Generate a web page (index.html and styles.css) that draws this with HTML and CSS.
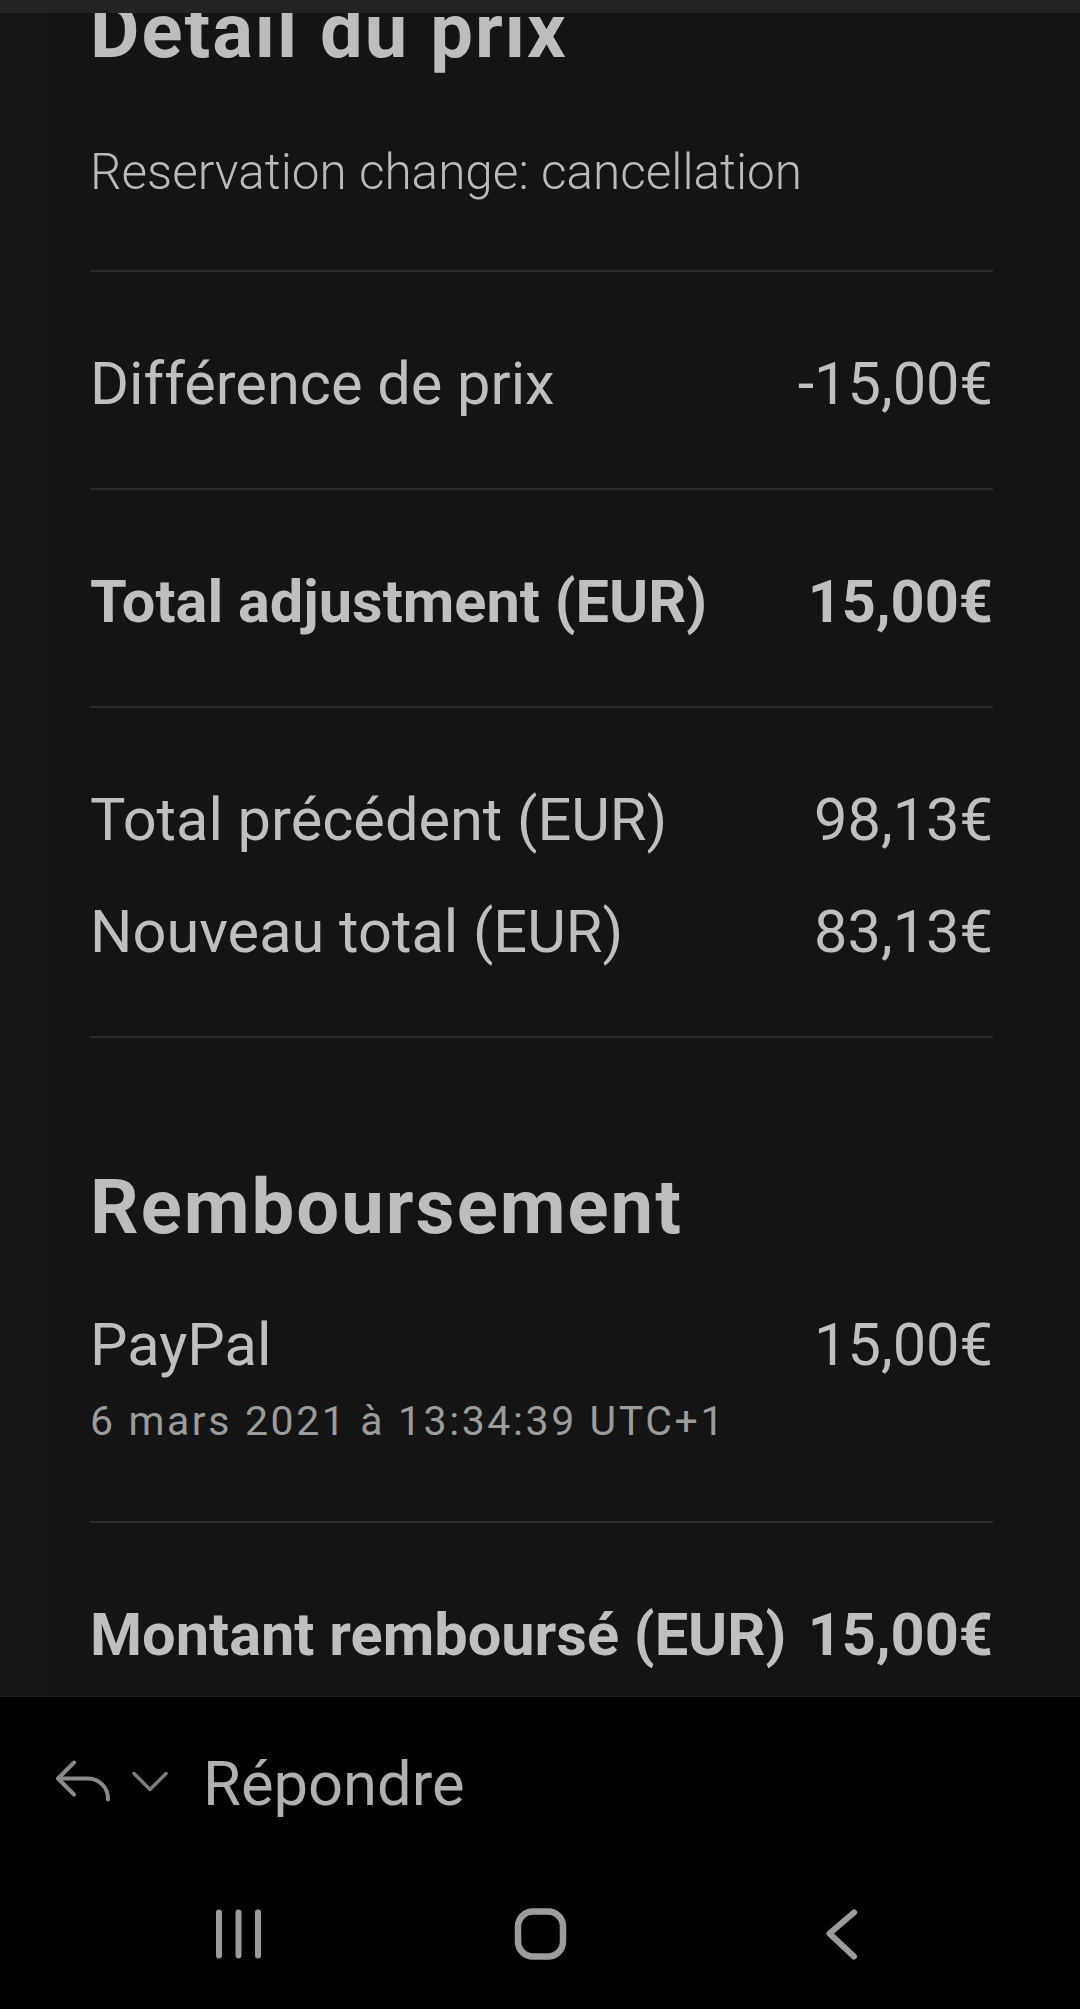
FILE: index.html
```html
<!DOCTYPE html>
<html lang="fr">
<head>
<meta charset="utf-8">
<title>Détail du prix</title>
<link rel="stylesheet" href="styles.css">
</head>
<body>
<div class="screen">
  <div class="top-edge"></div>
  <main class="viewport">
    <div class="mail">
      <section class="intro">
        <h1 class="title">Détail du prix</h1>
        <p class="subtitle">Reservation change: cancellation</p>
      </section>
      <section class="block">
        <div class="line"><span>Différence de prix</span><span>-15,00€</span></div>
      </section>
      <section class="block">
        <div class="line strong"><span>Total adjustment (EUR)</span><span>15,00€</span></div>
      </section>
      <section class="block group">
        <div class="line"><span>Total précédent (EUR)</span><span>98,13€</span></div>
        <div class="line"><span>Nouveau total (EUR)</span><span>83,13€</span></div>
      </section>
      <section class="refund">
        <h2 class="title">Remboursement</h2>
        <div class="payment">
          <div class="payment-info">
            <div class="line-text">PayPal</div>
            <div class="date">6 mars 2021 à 13:34:39 UTC+1</div>
          </div>
          <span class="line-text">15,00€</span>
        </div>
      </section>
      <section class="block">
        <div class="line strong"><span>Montant remboursé (EUR)</span><span>15,00€</span></div>
      </section>
    </div>
  </main>
  <footer class="bottom">
    <div class="reply-bar">
      <svg class="reply-icon" width="56" height="50" viewBox="0 0 56 50" aria-hidden="true">
        <path d="M19 3.5 L3 19.5 L19 35.5 M3 19.5 H33 A20 20 0 0 1 53 39.5 V40.5" fill="none" stroke="#8a8a8a" stroke-width="4" stroke-linecap="round" stroke-linejoin="round"/>
      </svg>
      <svg class="chev-icon" width="40" height="50" viewBox="0 0 40 50" aria-hidden="true">
        <path d="M4 14.5 L20 30.5 L36 14.5" fill="none" stroke="#7c7c7c" stroke-width="3.5" stroke-linecap="round" stroke-linejoin="round"/>
      </svg>
      <span class="reply-label">Répondre</span>
    </div>
    <nav class="navbar">
      <svg class="nav-item" width="100" height="60" viewBox="0 0 100 60" aria-hidden="true">
        <path d="M30 8.5 V51.5 M49.5 8.5 V51.5 M69 8.5 V51.5" fill="none" stroke="#9c9c9c" stroke-width="6" stroke-linecap="round"/>
      </svg>
      <svg class="nav-item" width="100" height="60" viewBox="0 0 100 60" aria-hidden="true">
        <rect x="28" y="7.5" width="45" height="45" rx="15" fill="none" stroke="#9c9c9c" stroke-width="6.5"/>
      </svg>
      <svg class="nav-item" width="100" height="60" viewBox="0 0 100 60" aria-hidden="true">
        <path d="M63 8.5 L38.5 29.5 L63 52.5" fill="none" stroke="#9c9c9c" stroke-width="6" stroke-linecap="round" stroke-linejoin="round"/>
      </svg>
    </nav>
  </footer>
</div>
</body>
</html>
```

FILE: styles.css
```css
* { box-sizing: border-box; }

html, body {
  margin: 0;
  padding: 0;
  background: #000;
}

body {
  font-family: Roboto, "Liberation Sans", Arial, sans-serif;
  color: #bfbfbf;
}

.screen {
  width: 1080px;
  height: 2009px;
  display: flex;
  flex-direction: column;
  overflow: hidden;
}

.top-edge {
  height: 13px;
  flex: none;
  background: #232323;
}

.viewport {
  flex: 1;
  min-height: 0;
  overflow: hidden;
  background: #161616;
  display: flex;
}

.mail {
  flex: 1;
  margin-left: 45px;
  background: #141414;
  padding: 0 87px 0 45px;
}

.title {
  margin: 0;
  font-size: 76px;
  line-height: 88px;
  font-weight: 700;
  letter-spacing: 2px;
  color: #bdbdbd;
}

.intro {
  border-bottom: 2px solid #2a2a2a;
  padding-bottom: 69px;
}

.intro .title {
  margin-top: -26px;
}

.subtitle {
  margin: 69px 0 0;
  font-size: 49.5px;
  line-height: 57px;
  font-weight: 300;
  color: #bababa;
}

.block {
  border-bottom: 2px solid #2a2a2a;
  padding: 77px 0 69px;
}

.group {
  display: flex;
  flex-direction: column;
  gap: 42px;
}

.line {
  display: flex;
  justify-content: space-between;
  align-items: baseline;
  font-size: 59.5px;
  line-height: 70px;
  font-weight: 400;
  white-space: nowrap;
}

.line.strong {
  font-weight: 700;
}

.refund {
  border-bottom: 2px solid #2a2a2a;
  padding: 125px 0 76px;
}

.payment {
  margin-top: 59px;
  display: flex;
  justify-content: space-between;
  align-items: flex-start;
}

.line-text {
  font-size: 59.5px;
  line-height: 70px;
}

.date {
  margin-top: 17px;
  font-size: 41px;
  line-height: 48px;
  letter-spacing: 2.6px;
  color: #9c9c9c;
}

.bottom {
  flex: none;
  height: 313px;
  background: #000;
  border-top: 1px solid #202020;
  display: flex;
  flex-direction: column;
}

.reply-bar {
  height: 173px;
  display: flex;
  align-items: center;
  padding-left: 55px;
}

.reply-icon { flex: none; }

.chev-icon {
  flex: none;
  margin-left: 19px;
}

.reply-label {
  margin-left: 33px;
  font-size: 61.5px;
  line-height: 70px;
  color: #b0b0b0;
}

.navbar {
  height: 139px;
  padding-bottom: 12px;
  display: flex;
  justify-content: center;
  align-items: center;
  gap: 201px;
}

.nav-item { flex: none; }
```
